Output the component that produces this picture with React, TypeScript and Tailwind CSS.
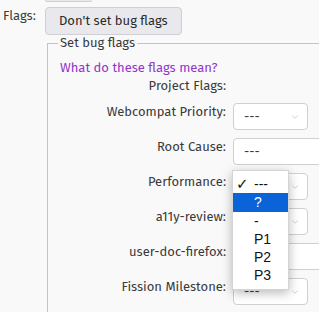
import { ChevronDown } from 'lucide-react'

const rows: { label: string; kind: 'select' | 'input' }[] = [
  { label: 'Webcompat Priority:', kind: 'select' },
  { label: 'Root Cause:', kind: 'input' },
  { label: 'Performance:', kind: 'select' },
  { label: 'a11y-review:', kind: 'select' },
  { label: 'user-doc-firefox:', kind: 'input' },
  { label: 'Fission Milestone:', kind: 'select' },
]

const options = ['---', '?', '-', 'P1', 'P2', 'P3']

function FakeSelect() {
  return (
    <div className="flex h-[27px] w-[75px] items-center justify-between rounded-[4px] border border-[#cfcfd4] bg-white pl-[10px] pr-[7px]">
      <span>---</span>
      <ChevronDown className="h-[10px] w-[10px] text-[#a8a8a8]" strokeWidth={1.25} />
    </div>
  )
}

function FakeInput() {
  return (
    <div className="flex h-[27px] w-[120px] items-center rounded-[4px] border border-[#cfcfd4] bg-white pl-[10px]">
      <span>---</span>
    </div>
  )
}

export default function App() {
  return (
    <div className="relative h-[312px] w-[319px] overflow-hidden bg-[#f9f9fa] font-['Fira_Sans','Open_Sans',sans-serif] text-[13px] leading-[18px] text-[#3a3a3a]">
      <div className="ml-[45px] h-[2px] w-[47px] rounded-b-[3px] border-x border-b border-[#cfcfd4] bg-[#e9e9ed]" />

      <div className="mt-[5px] flex items-start pl-[3px]">
        <span className="w-[42px] shrink-0">Flags:</span>
        <div className="shrink-0">
          <button className="h-[28px] rounded-[4px] border border-[#cfcfd4] bg-[#e9e9ed] px-[13px] text-[#2b2b2b]">
            Don&apos;t set bug flags
          </button>
          <fieldset className="-mt-[1px] ml-[2px] w-[300px] border border-[#c4c4c8] pb-[20px] pl-[10px]">
            <legend className="px-[2px]">Set bug flags</legend>
            <a className="mt-[7px] ml-[2px] block text-[#9036c9]">What do these flags mean?</a>
            <div className="grid grid-cols-[168px_auto] gap-x-[7px] gap-y-[8px]">
              <span className="text-right">Project Flags:</span>
              <span />
              {rows.map((r) => (
                <div key={r.label} className="contents">
                  <span className="text-right">{r.label}</span>
                  {r.kind === 'select' ? <FakeSelect /> : <FakeInput />}
                </div>
              ))}
            </div>
          </fieldset>
        </div>
      </div>

      <div className="absolute left-[232px] top-[170px] w-[57px] border border-[#d4d4d4] bg-white pt-[4px] pb-[5px] font-['Liberation_Sans',Arial,sans-serif] text-[14px] leading-[18px] text-[#111] shadow-[0_3px_10px_rgba(0,0,0,0.28)]">
        {options.map((o, i) => (
          <div
            key={o}
            className={
              i === 1
                ? 'relative flex h-[18.5px] items-center bg-[#0a64d8] pl-[21px] text-white'
                : 'relative flex h-[18px] items-center pl-[21px]'
            }
          >
            {i === 0 && (
              <span className="absolute left-[3px] font-['DejaVu_Sans',sans-serif] text-[15px] font-bold">✓</span>
            )}
            {o}
          </div>
        ))}
      </div>
    </div>
  )
}
